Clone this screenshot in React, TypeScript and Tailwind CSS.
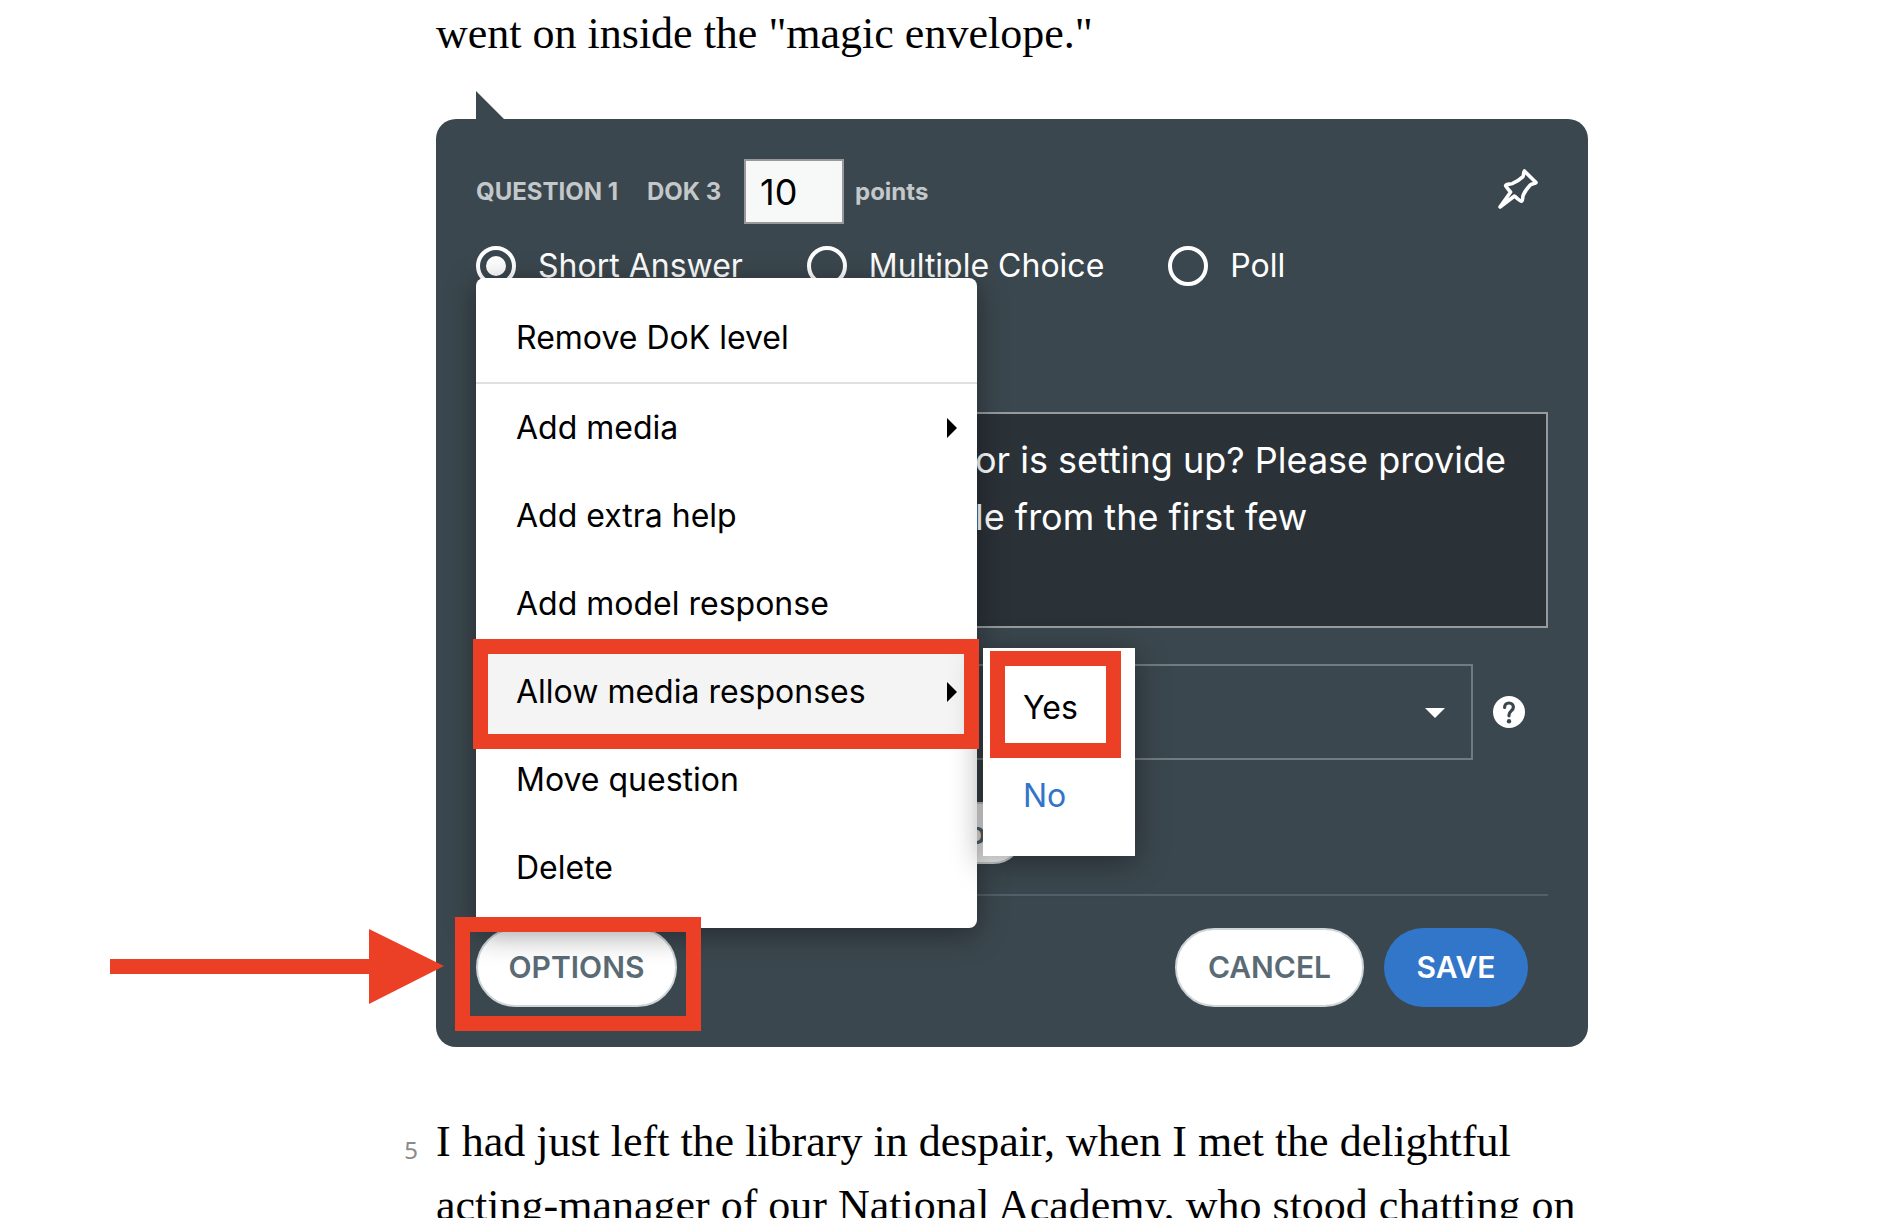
import { useState } from "react";

const menuItems = [
  { label: "Add media", submenu: true },
  { label: "Add extra help" },
  { label: "Add model response" },
  { label: "Allow media responses", submenu: true, active: true },
  { label: "Move question" },
  { label: "Delete" },
];

const questionTypes = ["Short Answer", "Multiple Choice", "Poll"];

const PinIcon = () => (
  <svg viewBox="0 0 40 40" className="size-10" fill="none" stroke="currentColor" strokeWidth="3.6" strokeLinejoin="round">
    <path d="M26.400 2 38 13.600c-1 1.400-4.500 1-6 2.600-2.800 3-5.300 6.600-6.800 10-.8 2 0 4.800-1.500 6-1.600.2-5.400-3.600-7.200-5.200L2 38 12.600 23C11 21 7.800 18 7.600 16.600c1-1.800 4.400-1.200 6.600-2 4-1.600 7.800-4.200 10.800-7C26 6 25 3.400 26.400 2Z" />
  </svg>
);

const HelpIcon = () => (
  <svg viewBox="0 0 32 32" className="size-8">
    <circle cx="16" cy="16" r="16" fill="white" />
    <path d="M11.600 11.400C11.600 8.600 13.500 7 16 7s4.400 1.800 4.400 4.200c0 3.400-4.400 4-4.400 7.600v1" fill="none" stroke="#3b474e" strokeWidth="3.2" strokeLinecap="round" />
    <circle cx="16" cy="25.200" r="2.200" fill="#3b474e" />
  </svg>
);

const OptionsMenu = () => (
  <div role="menu" className="absolute bottom-full left-0 z-10 w-[501px] rounded-lg bg-white py-4 text-black shadow-[0_6px_30px_rgba(0,0,0,0.4)]">
    <button role="menuitem" className="flex h-[88px] w-full items-center px-10 text-[32px]">
      Remove DoK level
    </button>
    <hr className="border-t-2 border-[#e0e0e0]" />
    {menuItems.map((item) => (
      <div key={item.label} className="relative">
        <button
          role="menuitem"
          className={`flex h-[88px] w-full items-center justify-between pr-5 pl-10 text-[32px] ${item.active ? "bg-[#f4f4f4]" : ""}`}
        >
          {item.label}
          {item.submenu && (
            <svg viewBox="0 0 10 20" className="h-5 w-2.5" fill="currentColor">
              <path d="M0 0 10 10 0 20Z" />
            </svg>
          )}
        </button>
        {item.active && (
          <>
            <MediaSubmenu />
            <Highlight className="-top-[9px] -right-0.5 -bottom-[13px] -left-[3px]" />
          </>
        )}
      </div>
    ))}
  </div>
);

const MediaSubmenu = () => (
  <div role="menu" className="absolute top-0 left-[507px] w-[152px] bg-white py-4 shadow-[0_6px_30px_rgba(0,0,0,0.4)]">
    <div className="relative">
      <button role="menuitem" className="flex h-[88px] w-full items-center px-10 text-[32px]">
        Yes
      </button>
      <Highlight className="-top-[13px] right-3.5 -bottom-1.5 left-[7px]" />
    </div>
    <button role="menuitem" className="flex h-[88px] w-full items-center px-10 text-[32px] text-[#3175ca]">
      No
    </button>
  </div>
);

// Red frame drawn over the control it points out
const Highlight = ({ className }: { className: string }) => (
  <div className={`pointer-events-none absolute z-20 border-[15px] border-[#eb4026] ${className}`} />
);

const App = () => {
  const [type, setType] = useState("Short Answer");

  return (
    <div className="h-screen overflow-hidden bg-white font-['Inter',sans-serif] text-white">
      <main className="mr-[306px] ml-[436px]">
        <p className="pt-0.5 font-['Liberation_Serif',serif] text-[44px] leading-[64px] whitespace-nowrap text-black">
          went on inside the "magic envelope."
        </p>

        <svg viewBox="0 0 28 28" className="mt-[25px] ml-10 block size-7" fill="#3b474e">
          <path d="M0 0 28 28H0Z" />
        </svg>

        <section className="rounded-[20px] bg-[#3b474e] p-10">
          <header className="flex h-[65px] items-center text-2xl font-bold text-[#c4c8ca]">
            <span className="w-[151px]">QUESTION 1</span>
            <span className="ml-5 w-[77px]">DOK 3</span>
            <input
              id="points"
              defaultValue="10"
              className="ml-5 h-[65px] w-[100px] border-2 border-[#999] bg-[#f7f9f8] px-[14px] text-[36px] font-normal text-black"
            />
            <label htmlFor="points" className="ml-[11px]">points</label>
            <button aria-label="Pin question" className="mr-2.5 mb-1.5 ml-auto text-white">
              <PinIcon />
            </button>
          </header>

          <div className="mt-[22px] flex gap-[64px]">
            {questionTypes.map((name) => (
              <label key={name} className="flex h-10 items-center gap-[22px] text-[32px]">
                <input
                  type="radio"
                  name="type"
                  checked={type === name}
                  onChange={() => setType(name)}
                  className="size-10 appearance-none rounded-full border-4 border-white bg-clip-content p-1.5 checked:bg-white"
                />
                {name}
              </label>
            ))}
          </div>

          <textarea
            aria-label="Question"
            defaultValue={"or is setting up? Please provide\nle from the first few"}
            className="mt-[126px] block h-[216px] w-full resize-none border-2 border-[#969b9e] bg-[#2a3137] py-[18px] pl-[497px] text-[36px] leading-[57px] whitespace-pre"
          />

          <div className="mt-9 flex items-center gap-5 pr-[23px]">
            <div className="relative flex-1">
              <select aria-label="Standard" className="h-24 w-full appearance-none border-2 border-[#727c80] px-6">
                <option></option>
              </select>
              <svg viewBox="0 0 20 10" className="absolute top-11 right-7 h-2.5 w-5" fill="currentColor">
                <path d="M0 0H20L10 10Z" />
              </svg>
            </div>
            <button aria-label="Help">
              <HelpIcon />
            </button>
          </div>

          <div className="mt-[42px] flex">
            <button className="h-[62px] w-[548px] rounded-full border-2 border-[#cfd6d9] bg-white pr-[36px] text-right text-[30px] font-semibold text-[#5a6b76]">
              o
            </button>
          </div>

          <hr className="mt-[30px] border-t-2 border-[#53606a]" />

          <footer className="relative mt-8 flex gap-5 pr-5 text-[30px] font-semibold">
            <button className="h-[79px] w-[201px] rounded-full border-2 border-[#cfd6d9] bg-white text-[#5a6b76]">OPTIONS</button>
            <button className="ml-auto h-[79px] w-[189px] rounded-full border-2 border-[#cfd6d9] bg-white text-[#5a6b76]">CANCEL</button>
            <button className="h-[79px] w-[144px] rounded-full bg-[#3276ca]">SAVE</button>
            <div className="absolute top-0 left-0 h-[79px] w-[201px] font-normal">
              <OptionsMenu />
              <Highlight className="-top-[11px] -right-6 -bottom-6 -left-[21px]" />
              <svg viewBox="0 0 334 76" className="absolute top-0 right-[233px] h-[76px] w-[334px]" fill="#eb4026">
                <path d="M0 31H259V1L334 38 259 76V46H0Z" />
              </svg>
            </div>
          </footer>
        </section>

        <div className="relative mt-[63px] font-['Liberation_Serif',serif] text-[44px] leading-[64px] whitespace-nowrap text-black">
          <span className="absolute top-2 right-full mr-[18px] font-['Noto_Sans',sans-serif] text-2xl leading-[64px] text-[#8a8a8a]">5</span>
          <p>
            I had just left the library in despair, when I met the delightful
            <br />
            acting-manager of our National Academy, who stood chatting on
          </p>
        </div>
      </main>
    </div>
  );
};

export default App;
